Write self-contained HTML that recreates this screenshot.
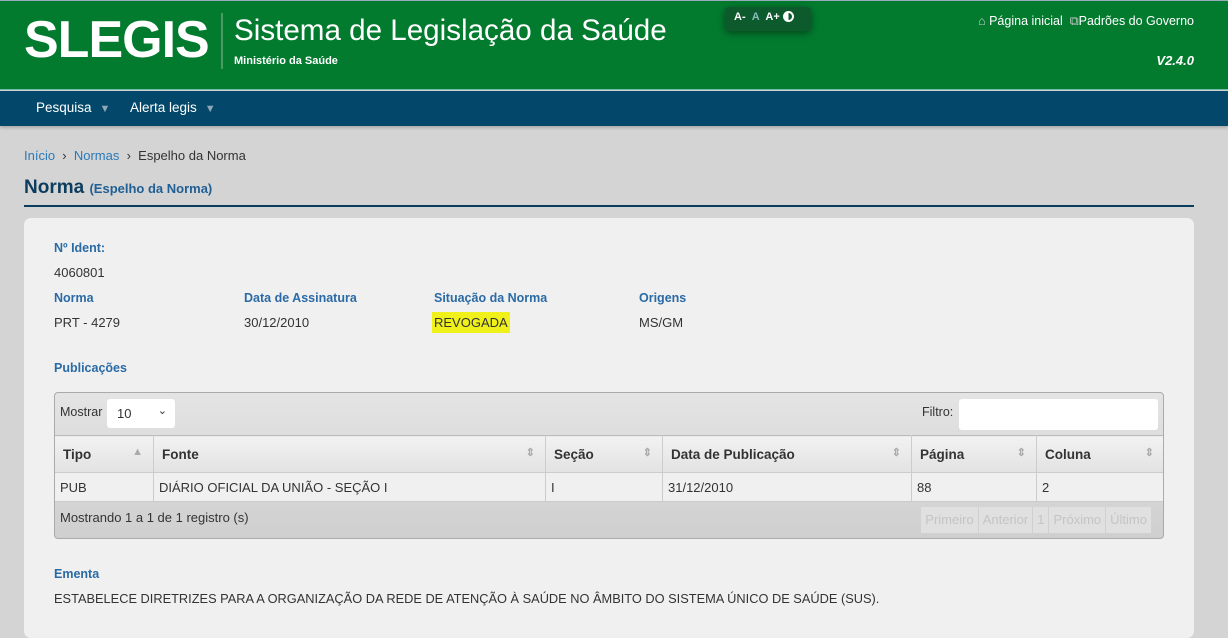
<!DOCTYPE html>
<html><head><meta charset="utf-8"><style>
*{margin:0;padding:0;box-sizing:border-box}
body{width:1228px;height:614px;overflow:hidden;background:#d4d4d4;font-family:"Liberation Sans",Arial,sans-serif;font-size:13px;color:#333;position:relative}
.hdr{position:absolute;left:0;top:0;width:1228px;height:90px;background:#037b2f;border-bottom:1px solid #6fb9a8;border-top:1px solid #9ab}
.logo{position:absolute;left:24px;top:9px;font-size:52px;font-weight:bold;color:#fff;letter-spacing:-1px}
.sep{position:absolute;left:221px;top:12px;width:2px;height:56px;background:#4a9a63}
.title{position:absolute;left:234px;top:13px;font-size:29.6px;color:#fff}
.sub{position:absolute;left:234px;top:54px;font-size:11px;font-weight:bold;color:#fff}
.acc{position:absolute;left:725px;top:6px;width:86px;height:24px;background:#0d5a2c;border-radius:4px;box-shadow:0 2px 8px rgba(0,0,0,.45);color:#fff;font-size:11px;font-weight:bold;padding:4px 0 0 9px;white-space:nowrap}
.acc .c{display:inline-block;width:11px;height:11px;border:2px solid #fff;border-radius:50%;vertical-align:-2px;background:linear-gradient(90deg,#fff 50%,transparent 50%)}
.links{position:absolute;right:34px;top:13px;color:#fff;font-size:12.5px}
.ver{position:absolute;right:34px;top:52px;color:#fff;font-size:13px;font-weight:bold;font-style:italic}
.nav{position:absolute;left:0;top:91px;width:1228px;height:35px;background:#03486a;box-shadow:0 2px 3px rgba(0,0,0,.2);color:#fff;font-size:13.5px}
.nav span{position:absolute;top:9px}
.tri{color:#8fa7b8;font-size:11px;margin-left:8px}
.bc{position:absolute;left:24px;top:148px;font-size:13px;color:#333}
.bc a{color:#2a7ab8}
h1{position:absolute;left:24px;top:177px;font-size:19px;color:#0d3d5e;font-weight:bold}
h1 small{font-size:13px;color:#1f5f93}
.rule{position:absolute;left:24px;top:205px;width:1170px;height:2px;background:#0d3d5e}
.card{position:absolute;left:24px;top:218px;width:1170px;height:420px;background:#f0f0f0;border-radius:7px}
.lbl{position:absolute;color:#2a6aa5;font-weight:bold;font-size:12.5px}
.val{position:absolute;color:#333;font-size:13px}
.tb{position:absolute;left:54px;top:392px;width:1110px;height:147px;border:1px solid #aaa;border-radius:4px;background:linear-gradient(#e4e4e4,#cfcfcf);overflow:hidden}
table{position:absolute;left:-1px;top:42px;width:1111px;border-collapse:collapse;font-size:13.5px}
th{height:37px;text-align:left;padding-left:8px;background:linear-gradient(#f2f2f2,#e2e2e2);border:1px solid #ccc;border-top:1px solid #bbb;font-weight:bold;color:#333;position:relative}
td{height:29px;padding-left:5px;background:#f0f0f0;border:1px solid #ccc;color:#333;font-size:13px}
th i{position:absolute;right:10px;top:10px;font-style:normal;color:#aaa;font-size:11px}
.pg{position:absolute;right:12px;top:114px;height:26px;background:#e0e0e0;color:#c4c4c4;font-size:13px;display:flex}
.pg span{padding:5px 4px;border-right:1px solid #d0d0d0}
</style></head><body>
<div class="hdr">
<div class="logo">SLEGIS</div><div class="sep"></div>
<div class="title">Sistema de Legislação da Saúde</div>
<div class="sub">Ministério da Saúde</div>
<div class="acc">A- &nbsp;<span style="color:#8bb">A</span> &nbsp;A+ <span class="c"></span></div>
<div class="links"><span style="color:#ccc">⌂</span> Página inicial &nbsp;<span style="color:#ccc">⧉</span>Padrões do Governo</div>
<div class="ver">V2.4.0</div>
</div>
<div class="nav"><span style="left:36px">Pesquisa<b class="tri">▼</b></span><span style="left:130px">Alerta legis<b class="tri">▼</b></span></div>
<div class="bc"><a>Início</a> &nbsp;›&nbsp; <a>Normas</a> &nbsp;›&nbsp; Espelho da Norma</div>
<h1>Norma <small>(Espelho da Norma)</small></h1>
<div class="rule"></div>
<div class="card"></div>
<div class="lbl" style="left:54px;top:241px">Nº Ident:</div>
<div class="val" style="left:54px;top:265px">4060801</div>
<div class="lbl" style="left:54px;top:291px">Norma</div>
<div class="lbl" style="left:244px;top:291px">Data de Assinatura</div>
<div class="lbl" style="left:434px;top:291px">Situação da Norma</div>
<div class="lbl" style="left:639px;top:291px">Origens</div>
<div class="val" style="left:54px;top:315px">PRT - 4279</div>
<div class="val" style="left:244px;top:315px">30/12/2010</div>
<div class="val" style="left:432px;top:312px;background:#f0f01a;padding:3px 2px">REVOGADA</div>
<div class="val" style="left:639px;top:315px">MS/GM</div>
<div class="lbl" style="left:54px;top:361px">Publicações</div>
<div class="tb">
<div style="position:absolute;left:5px;top:12px;font-size:12.5px">Mostrar</div>
<div style="position:absolute;left:52px;top:6px;width:68px;height:29px;background:#fff;border-radius:3px;font-size:13px;padding:7px 10px">10<span style="position:absolute;right:8px;top:5px;font-size:11px">⌄</span></div>
<div style="position:absolute;left:867px;top:12px;font-size:12.5px">Filtro:</div>
<div style="position:absolute;left:904px;top:6px;width:199px;height:31px;background:#fff;border-radius:3px"></div>
<table><tr><th style="width:99px">Tipo<i>▲</i></th><th style="width:392px">Fonte<i>⇕</i></th><th style="width:117px">Seção<i>⇕</i></th><th style="width:249px">Data de Publicação<i>⇕</i></th><th style="width:125px">Página<i>⇕</i></th><th>Coluna<i>⇕</i></th></tr>
<tr><td>PUB</td><td>DIÁRIO OFICIAL DA UNIÃO - SEÇÃO I</td><td>I</td><td>31/12/2010</td><td>88</td><td>2</td></tr></table>
<div style="position:absolute;left:5px;top:117px;font-size:13px">Mostrando 1 a 1 de 1 registro (s)</div>
<div class="pg"><span>Primeiro</span><span>Anterior</span><span>1</span><span>Próximo</span><span style="border:0">Último</span></div>
</div>
<div class="lbl" style="left:54px;top:567px">Ementa</div>
<div class="val" style="left:54px;top:591px;font-size:12.8px">ESTABELECE DIRETRIZES PARA A ORGANIZAÇÃO DA REDE DE ATENÇÃO À SAÚDE NO ÂMBITO DO SISTEMA ÚNICO DE SAÚDE (SUS).</div>
</body></html>
